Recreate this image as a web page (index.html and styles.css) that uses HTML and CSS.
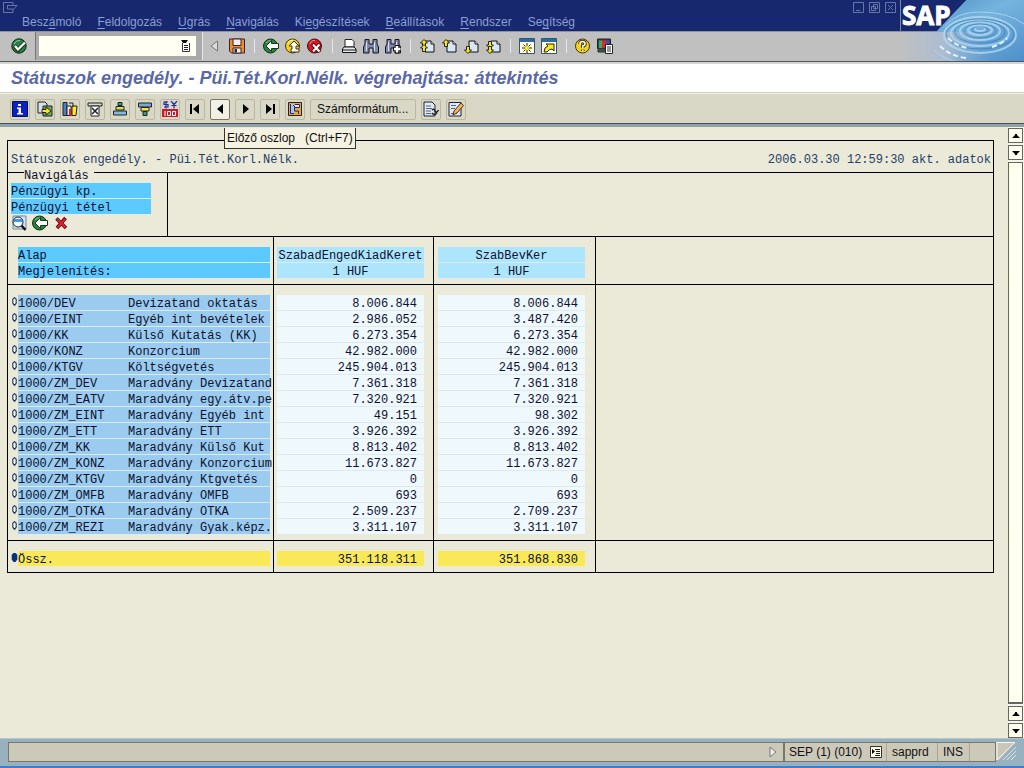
FILE: index.html
```html
<!DOCTYPE html>
<html lang="hu">
<head>
<meta charset="utf-8">
<title>Státuszok engedély. - Püi.Tét.Korl.Nélk.</title>
<link rel="stylesheet" href="styles.css">
</head>
<body>
<svg class="defs" aria-hidden="true">
  <symbol id="caret-up" viewBox="0 0 8 4"><path d="M0 4L3 1V0H5V1L8 4z"/></symbol>
  <symbol id="caret-down" viewBox="0 0 8 4"><path d="M0 0L3 3V4H5V3L8 0z"/></symbol>
  <symbol id="page" viewBox="0 0 16 16"><path d="M6 3H12L15 6V14H6z" fill="#d9e6f5" stroke="#111"/><path d="M12 3V6H15" fill="#fff" stroke="#111"/></symbol>
  <symbol id="yarrow-up" viewBox="0 0 8 8"><path d="M4 .5L7.500 4H5.500V7.500H2.500V4H.5z" fill="#fbea12" stroke="#222"/></symbol>
  <symbol id="yarrow-down" viewBox="0 0 8 8"><path d="M4 7.500L7.500 4H5.500V.5H2.500V4H.5z" fill="#fbea12" stroke="#222"/></symbol>
  <symbol id="back" viewBox="0 0 16 16"><circle cx="7.500" cy="8" r="7" fill="#28833c" stroke="#122b18"/><path d="M3 5Q5 2 9 3" fill="none" stroke="#8bd08f"/><path d="M3 8L8.500 2.500V5.500H15.500V10.500H8.500V13.500z" fill="#fff" stroke="#153d1c"/></symbol>
  <symbol id="oval" viewBox="0 0 6 8"><path d="M3 .5L4.500 2V5.500L3 7.500L1.500 5.500V2z"/></symbol>
  <symbol id="bino" viewBox="0 0 16 16"><path d="M2 1.500H6V6H10V1.500H14V6L15.500 9V15H10V10H6V15H.5V9L2 6z" fill="#8289a8" stroke="#151528"/><path d="M3.500 4V13M11.500 4V13" stroke="#d9def0"/></symbol>
</svg>
<div class="app">
  <header class="top">
    <div class="menubar">
      <svg class="sysmenu" viewBox="0 0 16 12" width="16" height="12"><path d="M1 1.500H11V4M1.500 1V11.500H11V8M5 4.500H15L11 9M5.500 4V8H11" fill="none" stroke="#6475ad"/></svg>
      <nav class="menu">
        <a href="#">Besz<u>á</u>moló</a><a href="#"><u>F</u>eldolgozás</a><a href="#"><u>U</u>grás</a><a href="#"><u>N</u>avigálás</a><a href="#">Ki<u>e</u>gészítések</a><a href="#"><u>B</u>eállítások</a><a href="#"><u>R</u>endszer</a><a href="#">Se<u>g</u>ítség</a>
      </nav>
      <div class="window-controls">
        <button aria-label="Kis méret"><svg viewBox="0 0 11 11"><path d="M.5.500H10.500V10.500H.5z" fill="none"/><path d="M3 8.500H7"/></svg></button>
        <button aria-label="Előző méret"><svg viewBox="0 0 11 11"><path d="M.5.500H10.500V10.500H.5z" fill="none"/><path d="M4.500 2.500H8.500V6.500H4.500zM2.500 4.500H6.500V8.500H2.500z" fill="none"/></svg></button>
        <button aria-label="Bezárás"><svg viewBox="0 0 11 11"><path d="M.5.500H10.500V10.500H.5z" fill="none"/><path d="M3 3L8 8M8 3L3 8"/></svg></button>
      </div>
    </div>
    <div class="toolbar">
      <button class="tool enter" aria-label="Enter"><svg viewBox="0 0 16 16"><circle cx="8" cy="8" r="7.200" fill="#287c46" stroke="#14271c"/><path d="M3 6Q5 2 9 2.500" fill="none" stroke="#93cf9d"/><path d="M3.500 8L7 12L14 4.500" fill="none" stroke="#153d1c" stroke-width="4"/><path d="M4 8L7 11.500L14 4.500" fill="none" stroke="#fff" stroke-width="2.200"/></svg></button>
      <div class="command">
        <input class="command-input" type="text" aria-label="Parancsmező">
        <button class="command-list" aria-label="Lista"><svg viewBox="0 0 10 12"><path d="M0 0H7L5 3H2z" fill="#111"/><path d="M1.500 3V11.500H8.500V3" fill="#fff" stroke="#333"/><path d="M3 5.500H7M3 7.500H7M3 9.500H7" stroke="#222"/></svg></button>
      </div>
      <button class="collapse" aria-label="Összecsukás"><svg viewBox="0 0 8 12"><path d="M7.500 1V11L1 6z" fill="#ddd" stroke="#777"/></svg></button>
      <button class="tool" aria-label="Mentés"><svg viewBox="0 0 16 16"><path d="M.5 1H15.500V15H2.500L.5 13z" fill="#ee8f2d" stroke="#3b2130"/><path d="M4 1H12V7.500H4z" fill="#f5efe9" stroke="#3b2130"/><path d="M4 10H12V15H4z" fill="#f3efe6" stroke="#3b2130"/><path d="M5.500 11H8V14.500H5.500z" fill="#3b2130"/></svg></button>
      <i class="sep"></i>
      <button class="tool" aria-label="Vissza"><svg><use href="#back"/></svg></button>
      <button class="tool" aria-label="Kilépés"><svg viewBox="0 0 16 16"><circle cx="7.500" cy="8" r="7" fill="#f3d21c" stroke="#43340a"/><path d="M2.500 6Q4 2 8 2" fill="none" stroke="#fff9a0"/><path d="M9 3L14 8H11V11H14V14H6V11H7V8H4z" fill="#fff" stroke="#43340a"/></svg></button>
      <button class="tool" aria-label="Megszakítás"><svg viewBox="0 0 16 16"><circle cx="7.500" cy="8" r="7" fill="#d61825" stroke="#4c0c10"/><path d="M3 6Q4 2 8 2.500" fill="none" stroke="#f6959a"/><path d="M5.500 6L13 14M13 6L5.500 14" stroke="#4c0c10" stroke-width="4"/><path d="M6 6.500L12.500 13.500M12.500 6.500L6 13.500" stroke="#fff" stroke-width="2"/></svg></button>
      <i class="sep"></i>
      <button class="tool" aria-label="Nyomtatás"><svg viewBox="0 0 16 16"><path d="M4 1.500H11L13 3.500V9H4z" fill="#fff" stroke="#222"/><path d="M3 9H13L15 11V14.500H1.500V11z" fill="#e8ecef" stroke="#111"/><path d="M2 12H15" stroke="#111"/></svg></button>
      <button class="tool" aria-label="Keresés"><svg><use href="#bino"/></svg></button>
      <button class="tool" aria-label="Tovább keresés"><svg viewBox="0 0 16 16"><use href="#bino"/><path d="M12 7V15.500M8 11H16" stroke="#111" stroke-width="4.500"/><path d="M12 8V14.500M9 11H15.500" stroke="#fff" stroke-width="2.500"/></svg></button>
      <i class="sep"></i>
      <button class="tool" aria-label="Első oldal"><svg viewBox="0 0 16 16"><use href="#page"/><use href="#yarrow-up" x="1" y="1" width="8" height="8"/><use href="#yarrow-up" x="1" y="6" width="8" height="8"/></svg></button>
      <button class="tool" aria-label="Előző oldal"><svg viewBox="0 0 16 16"><use href="#page"/><use href="#yarrow-up" x="1" y="1" width="8" height="8"/></svg></button>
      <button class="tool" aria-label="Következő oldal"><svg viewBox="0 0 16 16"><use href="#page"/><use href="#yarrow-down" x="1" y="8" width="8" height="8"/></svg></button>
      <button class="tool" aria-label="Utolsó oldal"><svg viewBox="0 0 16 16"><use href="#page"/><use href="#yarrow-down" x="1" y="3" width="8" height="8"/><use href="#yarrow-down" x="1" y="8" width="8" height="8"/></svg></button>
      <i class="sep"></i>
      <button class="tool" aria-label="Új mód"><svg viewBox="0 0 16 16"><path d="M.5.500H15.500V15.500H.5z" fill="#fffde0" stroke="#356"/><path d="M1 1H15V4H1z" fill="#2d6aa0"/><path d="M8 5V15M3 10H13M4.500 6.500L11.500 13.500M11.500 6.500L4.500 13.500" stroke="#222"/><circle cx="8" cy="10" r="2.200" fill="#fbe920"/></svg></button>
      <button class="tool" aria-label="Hivatkozás"><svg viewBox="0 0 16 16"><path d="M.5.500H15.500V15.500H.5z" fill="#fffde0" stroke="#356"/><path d="M1 1H15V4H1z" fill="#2d6aa0"/><path d="M3 14Q3 9 7 8L5 6H13V13L11 11Q8 11 6 14z" fill="#fbe920" stroke="#222"/></svg></button>
      <i class="sep"></i>
      <button class="tool" aria-label="Súgó"><svg viewBox="0 0 16 16"><circle cx="7.500" cy="8" r="7" fill="#f5d21d" stroke="#43340a"/><path d="M5 6Q5 3.500 7.500 3.500Q10 3.500 10 6Q10 7.500 7.800 8V10M7.800 11.500V13" fill="none" stroke="#43340a" stroke-width="3.500"/><path d="M5 6Q5 3.500 7.500 3.500Q10 3.500 10 6Q10 7.500 7.800 8V10M7.800 11.500V13" fill="none" stroke="#fff" stroke-width="1.600"/></svg></button>
      <button class="tool" aria-label="Megjelenítés"><svg viewBox="0 0 16 16"><path d="M.5 1H13.500V11H.5z" fill="#444" stroke="#222"/><path d="M2 2.500H5V10H2z" fill="#35b05a"/><path d="M5 2.500H9V10H5z" fill="#df2632"/><path d="M9 2.500H12V10H9z" fill="#3b4cc4"/><path d="M1 12H9V14H1z" fill="#3b8a5a" stroke="#222"/><path d="M8.500 6.500H15.500V15.500H8.500z" fill="#fff" stroke="#222"/><path d="M10 9H14M10 11H14M10 13H14" stroke="#333"/></svg></button>
    </div>
    <div class="brand">
      <svg viewBox="0 0 124 62" aria-hidden="true">
        <defs>
          <linearGradient id="water" x1="0" y1="0" x2="1" y2="1"><stop offset="0" stop-color="#3f7fbd"/><stop offset=".45" stop-color="#76b4de"/><stop offset="1" stop-color="#4e8fca"/></linearGradient>
          <linearGradient id="fade"><stop offset="0" stop-color="#c0c0c0"/><stop offset=".5" stop-color="#acbcd2"/><stop offset="1" stop-color="#7eaad3" stop-opacity="0"/></linearGradient>
        </defs>
        <path d="M66 0H124V62H0V32H36z" fill="url(#water)"/>
        <path d="M0 0H66L36 31H0z" fill="#18286f"/>
        <path d="M0 32H90V62H0z" fill="url(#fade)"/>
        <g fill="none" stroke="#b7dcf2" opacity=".75"><ellipse cx="80" cy="29" rx="5" ry="2" stroke-width="2"/><ellipse cx="80" cy="30" rx="12" ry="5" stroke-width="2"/><ellipse cx="80" cy="31" rx="20" ry="9" stroke-width="2"/><ellipse cx="80" cy="33" rx="29" ry="13" stroke-width="2"/><ellipse cx="80" cy="35" rx="36" ry="18" stroke-width="2"/><path d="M45 26Q56 12 80 12Q108 12 124 24M34 50Q44 60 60 62"/></g>
        <g fill="none" stroke="#3474b1" opacity=".6"><ellipse cx="80" cy="30" rx="8" ry="3"/><ellipse cx="80" cy="31" rx="16" ry="7"/><ellipse cx="80" cy="32" rx="25" ry="11"/><ellipse cx="80" cy="34" rx="34" ry="15"/></g>
        <path d="M40 46Q50 56 66 58M48 38Q56 46 68 48M92 47Q102 44 107 38" fill="none" stroke="#e4f5fd" stroke-width="2" stroke-dasharray="5 3"/>
        <path d="M0 31.500H36" stroke="#8b93a8"/><path d="M.5 0V32" stroke="#7d87a5"/><path d="M0 61.500H124" stroke="#555"/>
      </svg>
      <span class="brand-name">SAP</span>
    </div>
  </header>
  <h1 class="title">Státuszok engedély. - Püi.Tét.Korl.Nélk. végrehajtása: áttekintés</h1>
  <div class="actions">
    <button class="action" aria-label="Információ"><svg viewBox="0 0 16 16"><path d="M.5.500H15.500V15.500H.5z" fill="#0c22c8" stroke="#06105c"/><path d="M6 3H9V5H6zM5 6.500H9V12H11V13.500H5V12H6.500V8H5z" fill="#fff"/></svg></button>
    <button class="action" aria-label="Export"><svg viewBox="0 0 16 16"><path d="M1 1H8L10 3V12H1z" fill="#d5e2ee" stroke="#222"/><path d="M6 5H15V15H6z" fill="#6fa860" stroke="#222"/><path d="M5 8.500H9V6L14 10L9 14V11.500H5z" fill="#fbea20" stroke="#222"/></svg></button>
    <button class="action" aria-label="Grafika"><svg viewBox="0 0 16 16"><path d="M1 1.500H5V14.500H1z" fill="#4e7fc1" stroke="#222"/><path d="M5 5H9V14.500H5z" fill="#eee" stroke="#222"/><path d="M7 8H10V14.500H7z" fill="#df2632"/><path d="M10 5H15L14 14.500H10z" fill="#fbea20" stroke="#222"/><path d="M7 2H11V6" fill="none" stroke="#222"/></svg></button>
    <button class="action" aria-label="Szűrő"><svg viewBox="0 0 16 16"><path d="M1 2H15V5H1z" fill="#ded9c8" stroke="#222"/><path d="M4 5H12V15H4z" fill="#fff" stroke="#222"/><path d="M5 7L11 13M11 7L5 13" stroke="#222" stroke-width="1.500"/></svg></button>
    <button class="action" aria-label="Növekvő rendezés"><svg viewBox="0 0 16 16"><path d="M6 1.500H10V4.500H6z" fill="#3a9c78" stroke="#222"/><path d="M4 5.500H12V9H4z" fill="#d3e34b" stroke="#222"/><path d="M1.500 10H14.500V14H1.500z" fill="#85b8e0" stroke="#222"/></svg></button>
    <button class="action" aria-label="Csökkenő rendezés"><svg viewBox="0 0 16 16"><path d="M1.500 2H14.500V6H1.500z" fill="#7da7cc" stroke="#222"/><path d="M4 6.500H12V10H4z" fill="#f1e845" stroke="#222"/><path d="M6 10.500H10V14.500H6z" fill="#3a9c78" stroke="#222"/></svg></button>
    <button class="action" aria-label="Pénznem"><svg viewBox="0 0 16 16"><path d="M0 8H16V16H0z" fill="#c91a28"/><path d="M6 1H2V3.500H6V6H2M4 0V7.500M9 0L12 3.500L15 0M12 3V7.500M9.500 4.500H14.500" fill="none" stroke="#1c2da0" stroke-width="1.200"/><path d="M3 10V15M5.500 10.500H8.500V14.500H5.500zM10.500 10.500H13.500V14.500H10.500z" fill="none" stroke="#fff"/></svg></button>
    <button class="action" aria-label="Első oszlop"><svg viewBox="0 0 16 16"><path d="M3 3H5V13H3zM12 3V13L6 8z"/></svg></button>
    <span class="tip-anchor"><button class="action is-active" aria-label="Előző oszlop" aria-describedby="tip"><svg viewBox="0 0 16 16"><path d="M11 3V13L5 8z"/></svg></button><span class="tip" role="tooltip" id="tip">Előző oszlop&nbsp;&nbsp; (Ctrl+F7)</span></span>
    <button class="action" aria-label="Következő oszlop"><svg viewBox="0 0 16 16"><path d="M6 3V13L12 8z"/></svg></button>
    <button class="action" aria-label="Utolsó oszlop"><svg viewBox="0 0 16 16"><path d="M4 3V13L10 8zM11 3H13V13H11z"/></svg></button>
    <button class="action" aria-label="Váltás"><svg viewBox="0 0 16 16"><path d="M1.500 1.500H14.500V14.500H1.500z" fill="#f0a53a" stroke="#222"/><path d="M3 3H7V13H3z" fill="#a9c8f0"/><path d="M8 3H13V6.500H8z" fill="#dce8fa"/><path d="M3.500 3V12.500H7M6 4L8 6M8 3.500H12.500V6.500H7.500V10H11.500V13" fill="none" stroke="#18286f"/></svg></button>
    <button class="action action-text">Számformátum...</button>
    <button class="action" aria-label="Fejléc"><svg viewBox="0 0 16 16"><path d="M1 1H9L12 4V15H1z" fill="#dce8f5" stroke="#222"/><path d="M3 5H8M3 7.500H9M3 10H8M3 12.500H8" stroke="#567"/><path d="M9 9Q11 7 12 10Q13 13 15.500 9M9 12Q11 15 14 12" fill="none" stroke="#222" stroke-width="1.400"/></svg></button>
    <button class="action" aria-label="Szerkesztés"><svg viewBox="0 0 16 16"><path d="M1 1.500H13V15H1z" fill="#dce8f5" stroke="#222"/><path d="M3 4.500H8M3 7.500H7M3 12.500H9" stroke="#567"/><path d="M5 14L6 10L13 2L15.500 4.500L9 12z" fill="#f2b25b" stroke="#432"/></svg></button>
  </div>
  <div class="work">
    <main class="canvas">
      <section class="report">
        <div class="report-head"><span>Státuszok engedély. - Püi.Tét.Korl.Nélk.</span><span>2006.03.30 12:59:30 akt. adatok</span></div>
        <div class="navrow">
          <div class="navbox">
            <h2 class="navlegend">Navigálás</h2>
            <a class="navitem" href="#">Pénzügyi kp.</a>
            <a class="navitem" href="#">Pénzügyi tétel</a>
            <div class="navicons">
              <button aria-label="Részletek"><svg viewBox="0 0 16 16"><path d="M2 1H15V14H2z" fill="#cfe3f3" stroke="#789"/><path d="M10 10L14.500 15" stroke="#111" stroke-width="2.500"/><circle cx="7" cy="7" r="5" fill="#f4fbff" stroke="#222"/><path d="M3 4H11V7H3z" fill="#4596e6"/></svg></button>
              <button aria-label="Vissza"><svg><use href="#back"/></svg></button>
              <button aria-label="Törlés"><svg viewBox="0 0 16 16"><path d="M3.500 3.500L13 13M12.500 3L4 13" stroke="#4c0c10" stroke-width="3.500"/><path d="M4 4L12.500 12.500M12 4L4.500 12.500" stroke="#e32230" stroke-width="2"/></svg></button>
            </div>
          </div>
        </div>
        <table class="grid">
          <colgroup><col class="c-key"><col class="c-one"><col class="c-two"><col></colgroup>
          <thead><tr>
            <th scope="col"><span class="cell lead">Alap</span><span class="cell lead">Megjelenítés:</span></th>
            <th scope="col"><span class="cell head">SzabadEngedKiadKeret</span><span class="cell head">1 HUF</span></th>
            <th scope="col"><span class="cell head">SzabBevKer</span><span class="cell head">1 HUF</span></th>
            <td></td>
          </tr></thead>
          <tbody id="rows"></tbody>
          <tfoot><tr>
            <th scope="row"><div class="keyline"><svg class="mark full"><use href="#oval"/></svg><span class="cell sum">Össz.</span></div></th>
            <td><span class="cell num sum">351.118.311</span></td>
            <td><span class="cell num sum">351.868.830</span></td>
            <td></td>
          </tr></tfoot>
        </table>
      </section>
    </main>
    <div class="scroll">
      <button aria-label="Fel"><svg><use href="#caret-up"/></svg></button>
      <button aria-label="Le"><svg><use href="#caret-down"/></svg></button>
      <div class="thumb"></div>
      <button aria-label="Fel"><svg><use href="#caret-up"/></svg></button>
      <button aria-label="Le"><svg><use href="#caret-down"/></svg></button>
    </div>
  </div>
  <footer class="status">
    <div class="status-bar">
      <div class="message"><svg viewBox="0 0 8 12"><path d="M1 1V11L7 6z" fill="#eee" stroke="#777"/></svg></div>
      <div class="field session">SEP (1) (010) <svg viewBox="0 0 12 12"><path d="M.5.500H11.500V11.500H.5z" fill="#ffffe2" stroke="#333"/><path d="M2 3L5 5.500L2 8z"/><path d="M5 3.500H10M6 5.500H10M6 7.500H10M5 9.500H10" stroke="#222"/></svg></div>
      <div class="field server">sapprd</div>
      <div class="field mode">INS</div>
      <div class="field blank"></div>
    </div>
    <svg class="grip" viewBox="0 0 28 24"><path d="M0 3H19L3 21H0z" fill="#cbc7b8"/><path d="M0 3.500H19L1 21V3" fill="none" stroke="#f7f7f0"/><path d="M7 21L20 8M11 21L20 12M15 21L20 16" stroke="#dbe5e8"/></svg>
  </footer>
</div>
<script src="rows.js"></script>
</body>
</html>
```

FILE: styles.css
```css
* { box-sizing: border-box; }
body { margin: 0; font-family: "Liberation Sans", Arial, sans-serif; font-size: 12px; color: #111; }
button { margin: 0; padding: 0; border: 0; background: none; font: inherit; color: inherit; }
a { color: inherit; text-decoration: none; }
svg { display: block; flex: none; }
.defs { position: absolute; width: 0; height: 0; }
.app { display: flex; flex-direction: column; min-height: 100vh; background: #ebe9d8; }

.top { position: relative; }
.menubar { display: flex; height: 32px; background: #18286f; border-bottom: 1px solid #8b93a8; padding-left: 2px; }
.sysmenu { margin-top: 1px; }
.menu { display: flex; flex: 1; gap: 16px; padding: 15px 0 0 4px; line-height: 14px; color: #8c9fd4; }
.menu u { text-underline-offset: 2px; }
.window-controls { display: flex; gap: 5px; padding-top: 2px; margin-right: 128px; }
.window-controls button { width: 11px; height: 11px; }
.window-controls svg { width: 11px; height: 11px; stroke: #6475ad; }

.toolbar { display: flex; align-items: center; height: 30px; padding-bottom: 1px; background: #c0c0c0; border-bottom: 1px solid #555; }
.tool { display: flex; justify-content: center; width: 22px; }
.tool svg { width: 16px; height: 16px; }
.enter { width: 36px; height: 28px; align-items: center; padding-left: 2px; border-right: 1px solid #777; }
.command { display: flex; align-items: center; width: 167px; height: 28px; padding: 0 6px 0 3px; background: #aaa; border-right: 1px solid #e6e6e6; }
.command-input { flex: 1; min-width: 0; height: 20px; border: 0; padding: 0 4px; background: #fffff2; font: inherit; }
.command-list { height: 20px; padding: 0 5px 0 0; background: #fffff2; }
.command-list svg { width: 10px; height: 12px; }
.collapse { width: 23px; padding-left: 7px; }
.collapse svg { width: 8px; height: 12px; }
.sep { width: 12px; height: 14px; background: linear-gradient(#e9e9e9, #e9e9e9) 6px 0 / 1px 14px no-repeat; }
.brand { position: absolute; top: 0; right: 0; width: 124px; height: 62px; }
.brand-name { position: absolute; top: 0; left: 2px; font: 700 26px/30px "Open Sans", "Noto Sans", sans-serif; color: #fff; -webkit-text-stroke: 1px #fff; }

.title { margin: 0; height: 31px; padding-left: 11px; border-top: 2px solid #d4d4d4; border-bottom: 1px solid #d0cebd; background: #fff; font-size: 18px; font-style: italic; line-height: 28px; color: #5a69a5; white-space: nowrap; }
.actions { display: flex; align-items: center; gap: 5px; height: 34px; padding: 0 10px; background: #d9d8c6; border-top: 1px solid #f3f2e8; border-bottom: 3px solid #8fa3ac; box-shadow: inset 0 -1px #4d5254; }
.action { display: flex; align-items: center; justify-content: center; width: 20px; height: 21px; border: 1px solid #bbb8a0; border-radius: 2px; }
.action svg { width: 16px; height: 16px; }
.action-text { width: auto; padding: 0 7px 0 6px; white-space: nowrap; }
.is-active { background: #f2f0e4; border-color: #77766a; }
.tip-anchor { position: relative; }
.tip { position: absolute; top: 29px; left: 14px; z-index: 2; padding: 0 2px; border: 1px solid #333; border-top: 0; background: #f6f2e2; line-height: 20px; white-space: nowrap; }

.work { display: flex; flex: 1; }
.canvas { flex: 1; min-width: 0; padding: 13px 14px 20px 7px; }
.report { border: 1px solid #000; font: 12px/16px "Liberation Mono", "Courier New", monospace; color: #0b1030; }
.report-head { display: flex; justify-content: space-between; height: 31px; padding: 11px 2px 0 3px; color: #24406b; }
.navrow { height: 64px; border-top: 1px solid #000; }
.navbox { display: flex; flex-direction: column; align-items: flex-start; width: 160px; height: 63px; padding-left: 3px; border-right: 1px solid #000; line-height: 18px; }
.navlegend { height: 16px; margin: -6px 0 0 13px; padding-right: 5px; background: #ebe9d8; font: inherit; }
.navitem { width: 140px; height: 15px; margin-bottom: 1px; background: #5cc9ff; }
.navicons { display: flex; gap: 5px; }
.navicons svg { width: 16px; height: 16px; }

.grid { width: 100%; table-layout: fixed; border-spacing: 0; }
.c-key { width: 266px; }
.c-one { width: 160px; }
.c-two { width: 162px; }
.grid th, .grid td { padding: 0; font-weight: normal; text-align: left; vertical-align: top; }
.grid tr > :nth-child(1) { padding-left: 10px; padding-right: 3px; border-right: 1px solid #000; }
.grid tr > :nth-child(2) { padding-left: 3px; padding-right: 9px; border-right: 1px solid #000; }
.grid tr > :nth-child(3) { padding-left: 4px; padding-right: 10px; border-right: 1px solid #000; }
.grid thead tr > *, .grid tfoot tr > *, .grid tbody tr:first-child > * { padding-top: 10px; border-top: 1px solid #000; }
.grid thead tr > *, .grid tfoot tr > *, .grid tbody tr:last-child > * { padding-bottom: 5px; }
.cell { display: block; height: 15px; margin-bottom: 1px; line-height: 18px; white-space: nowrap; box-shadow: 0 1px #dfeaec; }
.lead { background: #5cc9ff; }
.head { background: #ade5fc; text-align: center; }
.num { padding-right: 7px; background: #eff8fc; text-align: right; }
.keyline { display: flex; margin-left: -7px; }
.keyline .cell { flex: 1; min-width: 0; }
.mark { width: 7px; height: 9px; margin-top: 2px; fill: #f6f8f8; stroke: #1c3c60; }
.mark.full { fill: #0a3470; stroke: #0a3470; stroke-width: 2px; }
.item { display: flex; background: #9bcbee; }
.code { flex: none; width: 110px; }
.sum { background: #f9e958; box-shadow: none; }

.scroll { display: flex; flex-direction: column; gap: 2px; width: 16px; padding: 1px 1px 0 0; background: #f6f5ec; }
.scroll button { display: flex; align-items: center; justify-content: center; height: 15px; border: 1px solid #66665c; background: #fffff0; }
.scroll svg { width: 8px; height: 4px; }
.thumb { flex: 1; border: 1px solid #66665c; border-bottom-width: 2px; background: #fffff0; }

.status { display: flex; align-items: flex-start; height: 30px; padding: 3px 0 0 8px; background: #97b1bf; border-bottom: 2px solid #3d7cd6; border-top: 1px solid #b5c6cb; }
.status-bar { display: flex; flex: 1; height: 20px; border: 1px solid #77766f; background: #cdc9b9; line-height: 18px; white-space: nowrap; }
.message { display: flex; flex: 1; align-items: center; justify-content: flex-end; padding-right: 6px; border-right: 2px solid #77766f; }
.message svg { width: 8px; height: 12px; }
.field { padding: 0 5px; border-right: 1px solid #aaa696; }
.session { display: flex; align-items: center; gap: 8px; width: 102px; padding: 0 4px; }
.session svg { width: 12px; height: 12px; }
.server { width: 51px; }
.mode { width: 32px; }
.blank { width: 25px; border: 0; }
.grip { width: 28px; height: 24px; margin-top: -3px; }
```

FILE: rows.js
```js
const items = [
  ["DEV", "Devizatand oktatás", "8.006.844", "8.006.844"],
  ["EINT", "Egyéb int bevételek", "2.986.052", "3.487.420"],
  ["KK", "Külső Kutatás (KK)", "6.273.354", "6.273.354"],
  ["KONZ", "Konzorcium", "42.982.000", "42.982.000"],
  ["KTGV", "Költségvetés", "245.904.013", "245.904.013"],
  ["ZM_DEV", "Maradvány Devizatand", "7.361.318", "7.361.318"],
  ["ZM_EATV", "Maradvány egy.átv.pe", "7.320.921", "7.320.921"],
  ["ZM_EINT", "Maradvány Egyéb int", "49.151", "98.302"],
  ["ZM_ETT", "Maradvány ETT", "3.926.392", "3.926.392"],
  ["ZM_KK", "Maradvány Külső Kut", "8.813.402", "8.813.402"],
  ["ZM_KONZ", "Maradvány Konzorcium", "11.673.827", "11.673.827"],
  ["ZM_KTGV", "Maradvány Ktgvetés", "0", "0"],
  ["ZM_OMFB", "Maradvány OMFB", "693", "693"],
  ["ZM_OTKA", "Maradvány OTKA", "2.509.237", "2.709.237"],
  ["ZM_REZI", "Maradvány Gyak.képz.", "3.311.107", "3.311.107"]
];
document.getElementById("rows").innerHTML = items.map(([code, name, one, two]) => `
  <tr>
    <th scope="row"><div class="keyline"><svg class="mark"><use href="#oval"/></svg><span class="cell item"><span class="code">1000/${code}</span><span>${name}</span></span></div></th>
    <td><span class="cell num">${one}</span></td>
    <td><span class="cell num">${two}</span></td>
    <td></td>
  </tr>`).join("");
```
